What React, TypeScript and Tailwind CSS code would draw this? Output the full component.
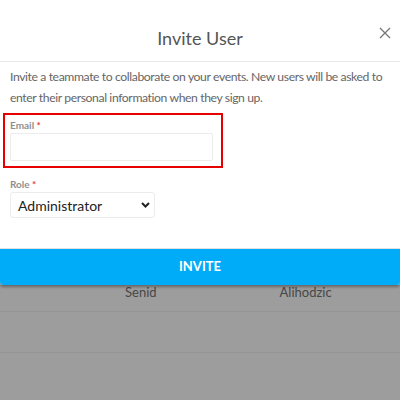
export default function App() {
  return (
    <div
      className="relative w-[400px] h-[400px] overflow-hidden bg-[#9d9d9d]"
      style={{ fontFamily: "Lato, 'Open Sans', sans-serif" }}
    >
      {/* Page behind the overlay */}
      <div className="pt-[284px]">
        <div className="flex h-[28px] items-start border-b border-[#959595] text-[13px] leading-[16px] text-[#474747]">
          <span className="ml-[125px]">Senid</span>
          <span className="ml-[123px]">Alihodzic</span>
        </div>
        <div className="h-[41px] border-b border-[#959595]" />
      </div>

      {/* Modal */}
      <div className="absolute left-0 top-0 w-full rounded-b-[3px] bg-white shadow-[0_2px_3px_rgba(0,0,0,0.35)]">
        <div className="relative flex h-[62px] items-center justify-center border-b border-[#e8e8e8] pt-[15px]">
          <h2 className="text-[18px] text-[#555]">Invite User</h2>
          <button className="absolute right-[9px] top-[27px] text-[#777]">
            <svg width="12" height="12" viewBox="0 0 12 12" fill="none" stroke="currentColor" strokeWidth="1.3">
              <path d="M1 1L11 11M11 1L1 11" />
            </svg>
          </button>
        </div>

        <div className="px-[10px] pt-[4px]">
          <p className="text-[12.2px] leading-[21px] tracking-[-0.4px] text-[#666]">
            Invite a teammate to collaborate on your events. New users will be asked to
            enter their personal information when they sign up.
          </p>

          <div className="-ml-[7px] mt-[5px] w-[220px] border-2 border-[#e60000] pb-[5px] pl-[5px] pr-[8px] pt-[4px]">
            <label className="block text-[10px] font-bold leading-[12px] text-[#8f8f8f]">
              Email <span className="text-[#e53935]">*</span>
            </label>
            <div className="mt-[2px] h-[28px] w-full rounded-[2px] border border-[#ececec]" />
          </div>

          <label className="mt-[10px] block text-[10px] font-bold leading-[12px] text-[#8f8f8f]">
            Role <span className="text-[#e53935]">*</span>
          </label>
          <div className="mt-[2px] flex h-[26px] w-[145px] items-center justify-between rounded-[3px] border border-[#ececec] pl-[7px] pr-[4px]">
            <span className="text-[14px] text-[#222]">Administrator</span>
            <svg width="9" height="6" viewBox="0 0 9 6" fill="none" stroke="#222" strokeWidth="2">
              <path d="M1 1L4.5 4.5L8 1" />
            </svg>
          </div>
        </div>

        <div className="mt-[30px] border-t border-[#e0e0e0]">
          <button className="flex h-[36px] w-full items-center justify-center rounded-b-[3px] bg-[#00abf7] text-[13px] font-bold text-white">
            INVITE
          </button>
        </div>
      </div>
    </div>
  );
}
